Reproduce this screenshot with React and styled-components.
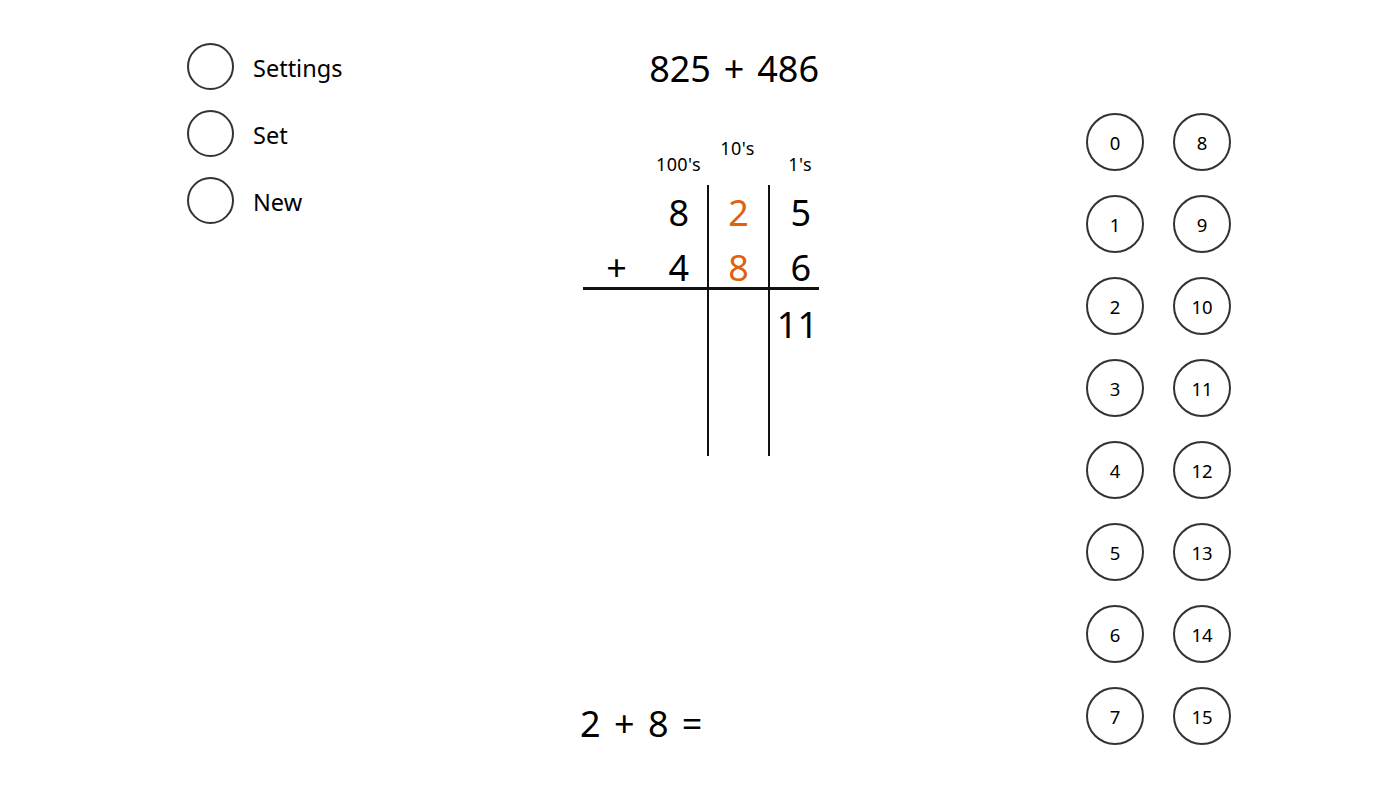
import React from 'react';
import styled, { createGlobalStyle } from 'styled-components';

const GlobalStyle = createGlobalStyle`
  html, body {
    margin: 0;
    padding: 0;
    background: #fff;
  }
  body {
    font-family: 'Noto Sans', 'Open Sans', sans-serif;
    color: #000;
  }
`;

const Page = styled.div`
  display: flex;
  height: 787px;
  padding-left: 187px;
  box-sizing: border-box;
`;

const Menu = styled.nav`
  width: 396px;
  padding-top: 43px;
  display: flex;
  flex-direction: column;
  gap: 20px;
`;

const MenuItem = styled.div`
  display: flex;
  align-items: center;
  gap: 19px;
  height: 47px;
`;

const Ring = styled.div`
  width: ${(p) => p.size}px;
  height: ${(p) => p.size}px;
  border: 2px solid #333;
  border-radius: 50%;
  box-sizing: border-box;
  display: flex;
  align-items: center;
  justify-content: center;
  flex-shrink: 0;
  padding-top: 2px;
  font-size: 18.5px;
  line-height: 1;
`;

const MenuLabel = styled.span`
  font-size: 23.5px;
  line-height: 1;
  padding-top: 4px;
`;

const Work = styled.main`
  width: 236px;
  display: flex;
  flex-direction: column;
`;

const Title = styled.div`
  margin-top: 51px;
  font-size: 36px;
  line-height: 1;
  text-align: right;
  white-space: pre;
  word-spacing: 3.5px;
`;

const Headers = styled.div`
  margin-top: 52px;
  display: grid;
  grid-template-columns: 67px 57px 61px 51px;
  height: 34px;
`;

const Header = styled.div`
  grid-column: ${(p) => p.col};
  align-self: ${(p) => (p.raised ? 'start' : 'end')};
  text-align: ${(p) => p.align};
  padding-right: ${(p) => p.pr || 0}px;
  font-size: 18px;
  line-height: 1;
  letter-spacing: 0.4px;
`;

const Board = styled.div`
  margin-top: 12px;
  display: grid;
  grid-template-columns: 67px 57px 61px 51px;
  grid-template-rows: 55px 50px 166px;
`;

const Cell = styled.div`
  box-sizing: border-box;
  font-size: 36px;
  line-height: 1;
  padding-top: ${(p) => p.pt}px;
  padding-right: ${(p) => p.pr || 0}px;
  text-align: ${(p) => p.align};
  color: ${(p) => (p.hot ? '#e0600f' : '#000')};
  border-left: ${(p) => (p.divider ? '2px solid #111' : 'none')};
  border-bottom: ${(p) => (p.underline ? '3px solid #111' : 'none')};
`;

const Prompt = styled.div`
  margin-top: auto;
  margin-left: -3px;
  padding-bottom: 45px;
  font-size: 36px;
  line-height: 1;
  white-space: pre;
  word-spacing: 4px;
`;

const Keypad = styled.div`
  margin-left: 267px;
  padding-top: 113px;
  display: grid;
  grid-template-columns: repeat(2, 58px);
  grid-template-rows: repeat(8, 58px);
  grid-auto-flow: column;
  column-gap: 29px;
  row-gap: 24px;
  align-content: start;
`;

const menu = ['Settings', 'Set', 'New'];

const rows = [
  { cells: ['', '8', '2', '5'], pt: 10 },
  { cells: ['+', '4', '8', '6'], pt: 10, underline: true },
  { cells: ['', '', '', '11'], pt: 17 },
];

const colStyle = [
  { align: 'center' },
  { align: 'right', pr: 18 },
  { align: 'center', divider: true, hot: true },
  { align: 'right', pr: 8, divider: true },
];

export default function App() {
  return (
    <>
      <GlobalStyle />
      <Page>
        <Menu>
          {menu.map((label) => (
            <MenuItem key={label}>
              <Ring size={47} />
              <MenuLabel>{label}</MenuLabel>
            </MenuItem>
          ))}
        </Menu>

        <Work>
          <Title>825 + 486</Title>
          <Headers>
            <Header col={2} align="right" pr={6}>100's</Header>
            <Header col={3} align="center" raised>10's</Header>
            <Header col={4} align="right" pr={7}>1's</Header>
          </Headers>
          <Board>
            {rows.map((row, r) =>
              row.cells.map((v, c) => {
                const s = colStyle[c];
                const isResult = r === 2;
                return (
                  <Cell
                    key={`${r}-${c}`}
                    pt={row.pt}
                    align={s.align}
                    pr={isResult && c === 3 ? 1 : s.pr}
                    divider={s.divider}
                    hot={s.hot && !isResult}
                    underline={row.underline}
                  >
                    {v}
                  </Cell>
                );
              })
            )}
          </Board>
          <Prompt>2 + 8 =</Prompt>
        </Work>

        <Keypad>
          {Array.from({ length: 16 }, (_, i) => (
            <Ring key={i} size={58}>
              {i}
            </Ring>
          ))}
        </Keypad>
      </Page>
    </>
  );
}
